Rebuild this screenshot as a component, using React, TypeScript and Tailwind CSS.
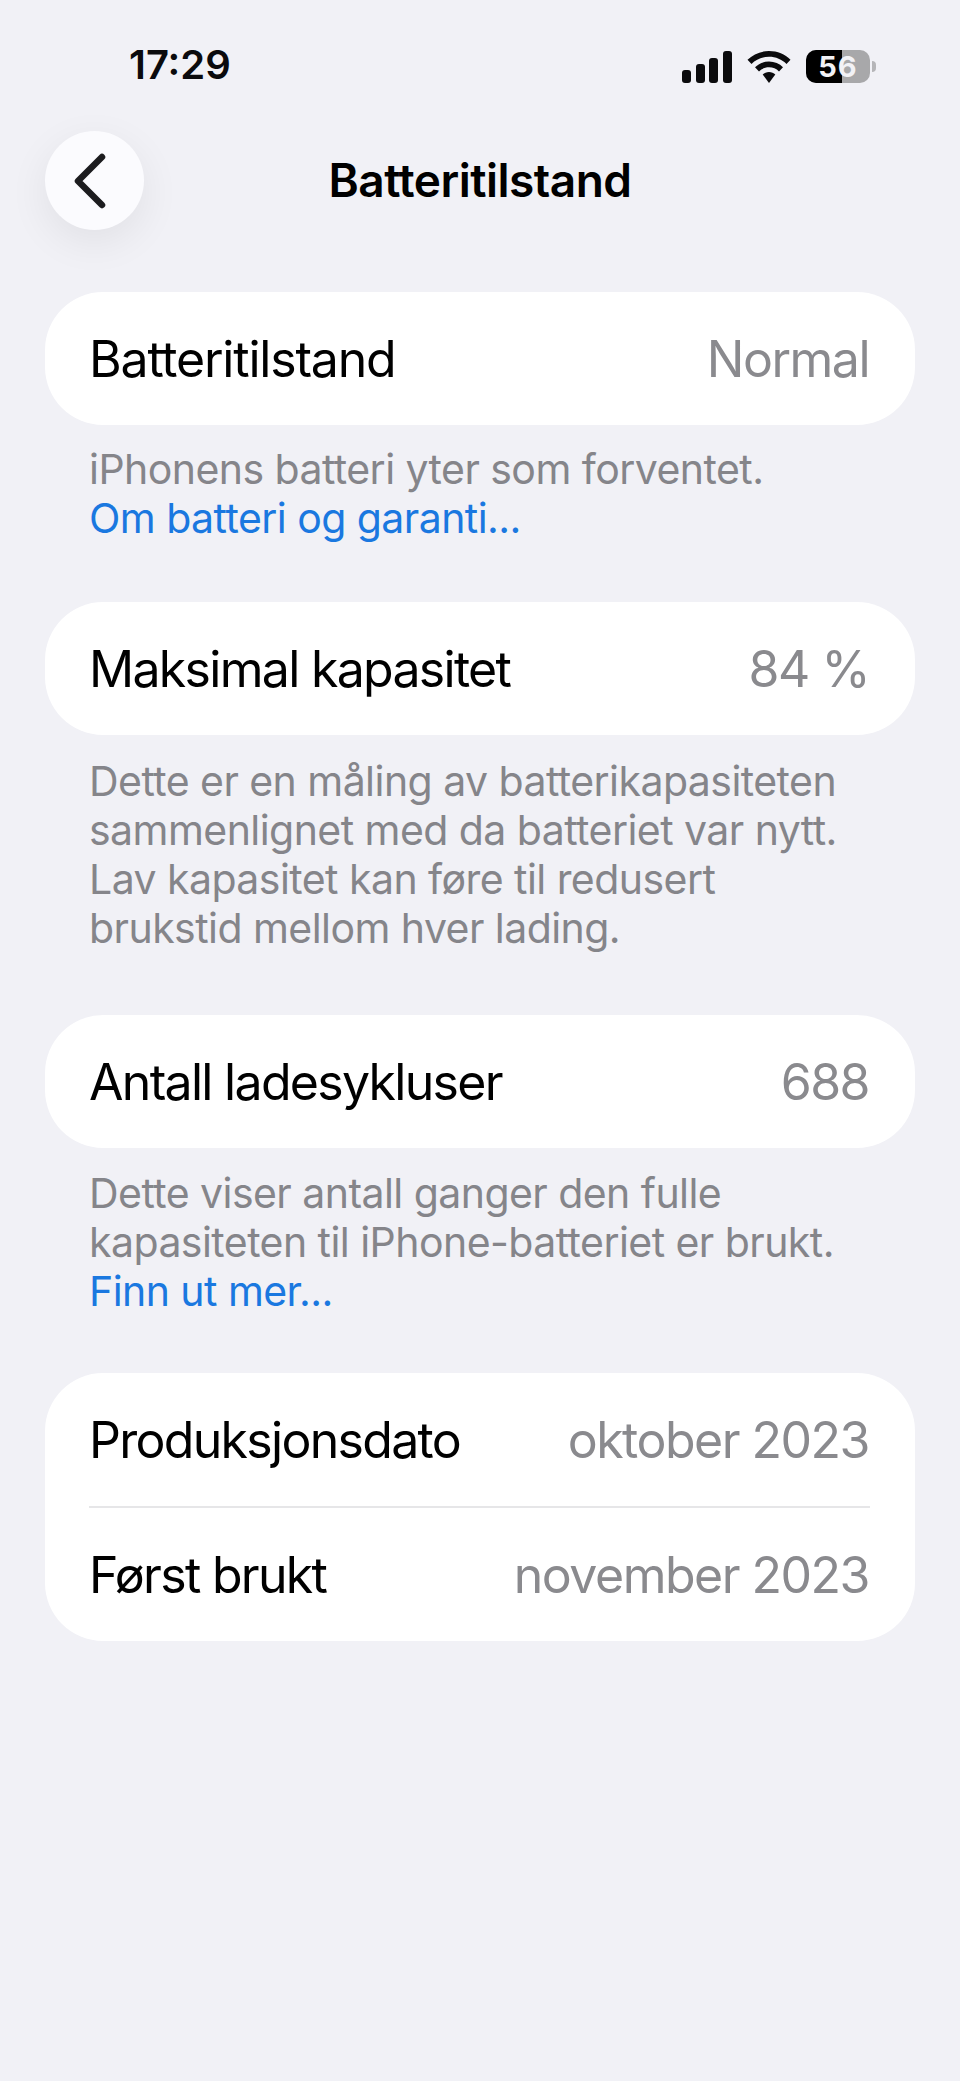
import React from "react";

const Row = ({ label, value, labelClass = "tracking-[-1.7px]" }: { label: string; value: string; labelClass?: string }) => (
  <div className="flex h-[133px] items-center justify-between">
    <span className={`text-[50px] leading-none text-black ${labelClass}`}>{label}</span>
    <span className="pr-[1px] text-[50px] leading-none tracking-[-1.5px] text-[#8a8a8e]">{value}</span>
  </div>
);

const Note = ({ children, className }: { children: React.ReactNode; className: string }) => (
  <div className={`px-[45px] text-[41px] leading-[49px] tracking-[-0.55px] text-[#85858a] ${className}`}>{children}</div>
);

const Link = ({ children }: { children: React.ReactNode }) => <div className="text-[#1a78e0]">{children}</div>;

const StatusBar = () => (
  <div className="flex h-[131px] items-start justify-between pl-[129px] pr-[84px] pt-[44px]">
    <span className="text-[40px] font-semibold leading-[42px] text-[#0b0b0d]">17:29</span>
    <div className="flex items-center gap-[15px] pt-[6px]">
      <svg width="50" height="32" viewBox="0 0 50 32" fill="#0b0b0d">
        <rect x="0" y="19" width="9" height="13" rx="3" />
        <rect x="14" y="13" width="9" height="19" rx="3" />
        <rect x="27" y="7" width="9" height="25" rx="3" />
        <rect x="41" y="0" width="9" height="32" rx="3" />
      </svg>
      <svg width="44" height="32" viewBox="0 0 44 32" fill="#0b0b0d">
        <path d="M22 0C13.500 0 6 3.300 0.500 8.800L4.500 13C9 8.500 15.200 5.800 22 5.800S35 8.500 39.500 13L43.500 8.800C38 3.300 30.500 0 22 0Z" />
        <path d="M22 10.500C16.500 10.500 11.500 12.700 8 16.300L12 20.400C14.600 17.800 18.100 16.300 22 16.300S29.400 17.800 32 20.400L36 16.300C32.500 12.700 27.500 10.500 22 10.500Z" />
        <path d="M22 21C19.500 21 17.300 22 15.700 23.600L22 32L28.300 23.600C26.700 22 24.500 21 22 21Z" />
      </svg>
      <div className="flex items-center gap-[2px]">
        <div className="relative flex h-[33px] w-[64px] overflow-hidden rounded-[10px] bg-[#a8a8aa]">
          <div className="h-full w-[36px] bg-black" />
          <span className="absolute inset-0 text-center text-[29px] font-bold leading-[33px] tracking-[1px] text-[#f2f2f6]">56</span>
        </div>
        <div className="h-[11px] w-[4px] rounded-r-full bg-[#b5b5b8]" />
      </div>
    </div>
  </div>
);

const App = () => (
  <div className="h-[2081px] w-[960px] overflow-hidden bg-[#f1f1f6] font-['Inter',sans-serif]">
    <StatusBar />
    <div className="relative flex h-[99px] items-center justify-center">
      <div className="absolute left-[45px] top-0 flex h-[99px] w-[99px] items-center justify-center rounded-full bg-[#fbfbfe] pr-[10px] shadow-[0_12px_40px_rgba(0,0,0,0.07)]">
        <svg width="36" height="56" viewBox="0 0 36 56" fill="none" stroke="#1c1c1f" strokeWidth="6.500" strokeLinecap="round" strokeLinejoin="round">
          <path d="M30 4L6 28L30 52" />
        </svg>
      </div>
      <span className="text-[46px] font-semibold tracking-[-0.5px] text-black">Batteritilstand</span>
    </div>
    <div className="px-[45px] pt-[62px]">
      <div className="rounded-[58px] bg-white pl-[44px] pr-[45px]">
        <Row label="Batteritilstand" value="Normal" labelClass="tracking-[-1.2px]" />
      </div>
    </div>
    <Note className="pt-[20px]">
      <div className="pl-[44px] pr-[45px]">
        iPhonens batteri yter som forventet.
        <Link>Om batteri og garanti...</Link>
      </div>
    </Note>
    <div className="px-[45px] pt-[59px]">
      <div className="rounded-[58px] bg-white pl-[44px] pr-[45px]">
        <Row label="Maksimal kapasitet" value="84 %" />
      </div>
    </div>
    <Note className="pt-[22px]">
      <div className="pl-[44px] pr-[45px]">
        Dette er en måling av batterikapasiteten
        <br />
        sammenlignet med da batteriet var nytt.
        <br />
        Lav kapasitet kan føre til redusert
        <br />
        brukstid mellom hver lading.
      </div>
    </Note>
    <div className="px-[45px] pt-[62px]">
      <div className="rounded-[58px] bg-white pl-[44px] pr-[45px]">
        <Row label="Antall ladesykluser" value="688" />
      </div>
    </div>
    <Note className="pt-[21px]">
      <div className="pl-[44px] pr-[45px]">
        Dette viser antall ganger den fulle
        <br />
        kapasiteten til iPhone-batteriet er brukt.
        <Link>Finn ut mer...</Link>
      </div>
    </Note>
    <div className="px-[45px] pt-[57px]">
      <div className="rounded-[58px] bg-white pl-[44px] pr-[45px]">
        <Row label="Produksjonsdato" value="oktober 2023" />
        <div className="h-[2px] bg-[#e6e6e8]" />
        <Row label="Først brukt" value="november 2023" />
      </div>
    </div>
  </div>
);

export default App;
